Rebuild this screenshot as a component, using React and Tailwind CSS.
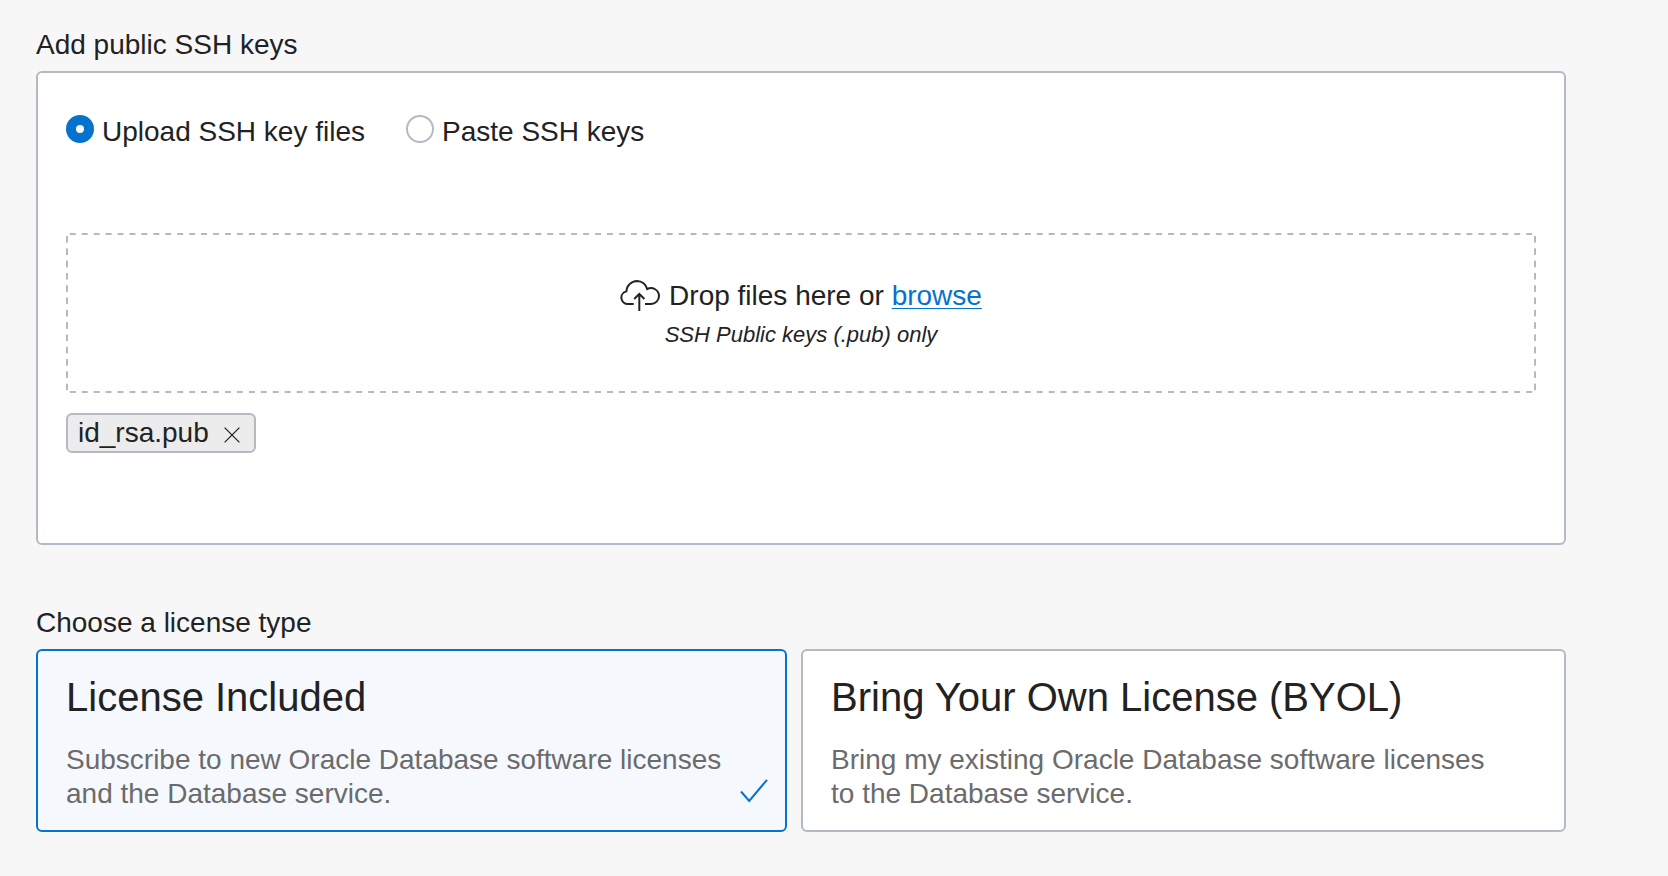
import { useState } from "react";

function RadioOption({ id, label, checked, onChange }) {
  return (
    <div className="flex items-start gap-2">
      <input
        id={id}
        type="radio"
        name="ssh-source"
        checked={checked}
        onChange={onChange}
        className="size-7 shrink-0 appearance-none rounded-full border-2 border-[#b3bac4] bg-white checked:border-10 checked:border-[#0572ce]"
      />
      <label htmlFor={id}>{label}</label>
    </div>
  );
}

function LicenseCard({ id, title, text, checked, onChange, className }) {
  return (
    <label
      htmlFor={id}
      className={
        "flex items-end rounded-md border-2 pt-[22px] pr-[17px] pb-[19px] pl-7 " +
        (checked ? "border-[#0572ce] bg-[#f5f9fe] " : "border-[#b3bac4] bg-white ") +
        className
      }
    >
      <input
        id={id}
        type="radio"
        name="license"
        checked={checked}
        onChange={onChange}
        className="sr-only"
      />
      <span className="flex flex-1 flex-col gap-[22px]">
        <span className="text-[40px] leading-12">{title}</span>
        <span className="text-[#6b6b6b]">{text}</span>
      </span>
      <svg
        viewBox="0 0 28 24"
        aria-hidden="true"
        className={"mb-2 ml-2 h-6 w-7 shrink-0 " + (checked ? "" : "invisible")}
        fill="none"
        stroke="#0572ce"
        strokeWidth="2"
      >
        <path d="M1 12.5 L9.2 22 L27 0.8" />
      </svg>
    </label>
  );
}

export default function App() {
  const [source, setSource] = useState("upload");
  const [license, setLicense] = useState("included");
  const [files, setFiles] = useState(["id_rsa.pub"]);

  return (
    <main className="min-h-screen bg-[#f7f7f7] pt-7 pr-[102px] pb-11 pl-9 font-['Liberation_Sans',Arial,sans-serif] text-[28px] leading-[34px] text-[#222222]">
      <h2 className="mb-[9px]">Add public SSH keys</h2>
      <section className="rounded-md border-2 border-[#b3bac4] bg-white px-7 pt-[42px] pb-[90px]">
        <div className="flex gap-[41px]">
          <RadioOption
            id="upload"
            label="Upload SSH key files"
            checked={source === "upload"}
            onChange={() => setSource("upload")}
          />
          <RadioOption
            id="paste"
            label="Paste SSH keys"
            checked={source === "paste"}
            onChange={() => setSource("paste")}
          />
        </div>
        <div className="mt-[84px] flex flex-col items-center gap-[9px] pt-[46px] pb-[45px] [background:linear-gradient(90deg,transparent_25%,#b3bac4_25%_75%,transparent_75%)_top/12px_2px_round_no-repeat,linear-gradient(90deg,transparent_25%,#b3bac4_25%_75%,transparent_75%)_bottom/12px_2px_round_no-repeat,linear-gradient(transparent_25%,#b3bac4_25%_75%,transparent_75%)_left/2px_12px_no-repeat_round,linear-gradient(transparent_25%,#b3bac4_25%_75%,transparent_75%)_right/2px_12px_no-repeat_round]">
          <div className="flex items-start gap-[9px]">
            <svg
              viewBox="0 0 40 32"
              aria-hidden="true"
              className="mt-px h-8 w-10"
              fill="none"
              stroke="#222222"
              strokeWidth="2"
            >
              <path d="M13.7 24 H8 A6.7 6.4 0 0 1 6.4 11.4 A11 10.8 0 0 1 17 1 A11 10.8 0 0 1 27.2 9.1 A8 7.9 0 0 1 39 16 A8 8 0 0 1 31 24 H25" />
              <path d="M19.3 31 V14.2 M14.2 19 L19.3 13.9 L24.4 19" />
            </svg>
            <p>
              Drop files here or{" "}
              <a
                href="#browse"
                className="text-[#0572ce] underline decoration-1 underline-offset-[3px]"
              >
                browse
              </a>
            </p>
          </div>
          <p className="text-[22px] leading-[26px] italic">SSH Public keys (.pub) only</p>
        </div>
        <ul className="mt-5 flex h-10 gap-2">
          {files.map((name) => (
            <li
              key={name}
              className="flex items-center gap-[15px] rounded-md border-2 border-[#b3bac4] bg-[#ececec] pr-3.5 pl-2.5"
            >
              <span>{name}</span>
              <button
                type="button"
                aria-label={"Remove " + name}
                onClick={() => setFiles(files.filter((f) => f !== name))}
              >
                <svg
                  viewBox="0 0 16 16"
                  className="mt-1 size-4"
                  fill="none"
                  stroke="#222222"
                  strokeWidth="1.3"
                >
                  <path d="M0.6 0.6 L15.4 15.4 M15.4 0.6 L0.6 15.4" />
                </svg>
              </button>
            </li>
          ))}
        </ul>
      </section>

      <h2 className="mt-[61px] mb-[9px]">Choose a license type</h2>
      <div className="grid grid-cols-2">
        <LicenseCard
          id="included"
          title="License Included"
          text="Subscribe to new Oracle Database software licenses and the Database service."
          checked={license === "included"}
          onChange={() => setLicense("included")}
          className="mr-3.5"
        />
        <LicenseCard
          id="byol"
          title="Bring Your Own License (BYOL)"
          text="Bring my existing Oracle Database software licenses to the Database service."
          checked={license === "byol"}
          onChange={() => setLicense("byol")}
          className=""
        />
      </div>
    </main>
  );
}
